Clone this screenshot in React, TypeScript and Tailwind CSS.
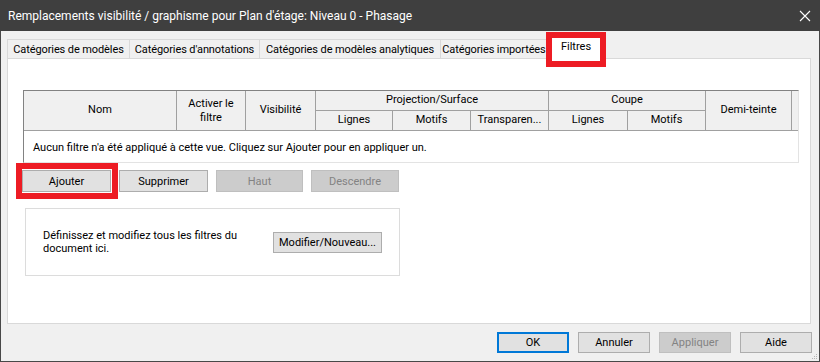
import React from "react";

// dialog button, classic win look
function Btn({
  label,
  className = "",
  disabled = false,
}: {
  label: string;
  className?: string;
  disabled?: boolean;
}) {
  return (
    <div
      className={`flex items-center justify-center border leading-none whitespace-nowrap ${
        disabled
          ? "bg-[#cccccc] border-[#bfbfbf] text-[#838383]"
          : "bg-[#e1e1e1] border-[#adadad] text-black"
      } ${className}`}
    >
      {label}
    </div>
  );
}

function Cell({ children, className = "" }: { children: React.ReactNode; className?: string }) {
  return (
    <div className={`flex items-center justify-center text-center border-r border-b border-[#a0a0a0] ${className}`}>
      {children}
    </div>
  );
}

function Tab({ label, className = "" }: { label: string; className?: string }) {
  return (
    <div className={`h-[19px] pt-[2px] flex items-center justify-center whitespace-nowrap tracking-[-0.1px] border-l border-t border-[#d9d9d9] ${className}`}>
      {label}
    </div>
  );
}

export default function App() {
  return (
    <div className="w-[820px] h-[362px] flex flex-col bg-[#f0f0f0] text-[11px] text-black font-['Roboto',sans-serif] overflow-hidden">
      {/* Title bar */}
      <div className="h-[31px] bg-[#3f3f3f] flex items-center justify-between pl-[8px] pr-[10px] text-white text-[12px]">
        <span>Remplacements visibilité / graphisme pour Plan d'étage: Niveau 0 - Phasage</span>
        <svg width="12" height="12" viewBox="0 0 12 12" className="mr-[-1px]">
          <path d="M1 1L11 11M11 1L1 11" stroke="#ffffff" strokeWidth="1.1" />
        </svg>
      </div>

      {/* Body */}
      <div className="relative flex-1 flex flex-col border-x border-b border-[#484848]">
        {/* Tabs */}
        <div className="h-[27px] flex items-end pl-[6px]">
          <Tab label="Catégories de modèles" className="w-[122px]" />
          <Tab label="Catégories d'annotations" className="w-[130px]" />
          <Tab label="Catégories de modèles analytiques" className="w-[181px]" />
          <Tab label="Catégories importées" className="w-[107px]" />
          <div className="relative z-10 w-[58px] h-[25px] mb-[-1px] bg-white flex items-center justify-center border-l border-t border-r border-[#d9d9d9]">
            Filtres
            <div className="absolute left-[-2px] top-[-3px] w-[60px] h-[35px] border-[6px] border-[#ed1c24]" />
          </div>
        </div>

        {/* Tab panel */}
        <div className="ml-[6px] w-[804px] h-[266px] bg-white border border-[#d9d9d9] flex flex-col">
          {/* Filter table */}
          <div className="ml-[15px] mt-[31px] w-[776px] border border-[#e3e3e3] border-l-[#828282] border-t-[#828282]">
            <div className="grid grid-cols-[153px_69px_70px_77px_78px_78px_79px_78px_86px_1fr] grid-rows-[20px_20px] bg-[#f0f0f0]">
              <Cell className="row-span-2">Nom</Cell>
              <Cell className="row-span-2 leading-[14px]">
                Activer le
                <br />
                filtre
              </Cell>
              <Cell className="row-span-2">Visibilité</Cell>
              <Cell className="col-span-3">Projection/Surface</Cell>
              <Cell className="col-span-2">Coupe</Cell>
              <Cell className="row-span-2">Demi-teinte</Cell>
              <div className="row-span-2 border-b border-[#a0a0a0]" />
              <Cell>Lignes</Cell>
              <Cell>Motifs</Cell>
              <Cell>Transparen...</Cell>
              <Cell>Lignes</Cell>
              <Cell>Motifs</Cell>
            </div>
            <div className="h-[31px] flex items-center pl-[9px] pt-[3px] bg-white">
              Aucun filtre n'a été appliqué à cette vue. Cliquez sur Ajouter pour en appliquer un.
            </div>
          </div>

          {/* Row buttons */}
          <div className="ml-[14px] mt-[7px] flex gap-[8px]">
            <div className="relative">
              <Btn label="Ajouter" className="w-[89px] h-[22px]" />
              <div className="absolute left-[-6px] top-[-7px] right-[-7px] bottom-[-7px] border-[6px] border-[#ed1c24]" />
            </div>
            <Btn label="Supprimer" className="w-[89px] h-[22px]" />
            <Btn label="Haut" disabled className="w-[87px] h-[22px]" />
            <Btn label="Descendre" disabled className="w-[88px] h-[22px]" />
          </div>

          {/* Group box */}
          <div className="ml-[17px] mt-[16px] w-[375px] h-[68px] border border-[#dcdcdc] flex items-center pl-[17px]">
            <div className="w-[230px] leading-[13px]">
              Définissez et modifiez tous les filtres du
              <br />
              document ici.
            </div>
            <Btn label="Modifier/Nouveau..." className="w-[109px] h-[21px]" />
          </div>
        </div>

        {/* Dialog buttons */}
        <div className="mt-[8px] flex justify-end gap-[9px] pr-[7px]">
          <Btn label="OK" className="w-[72px] h-[21px] border-2 !border-[#0078d7]" />
          <Btn label="Annuler" className="w-[72px] h-[21px]" />
          <Btn label="Appliquer" disabled className="w-[72px] h-[21px]" />
          <Btn label="Aide" className="w-[72px] h-[21px]" />
        </div>

        {/* Resize grip */}
        <svg width="7" height="7" viewBox="0 0 7 7" className="absolute right-[1px] bottom-[1px]">
          <rect x="5" y="1" width="1" height="1" fill="#b5b5b5" />
          <rect x="3" y="3" width="1" height="1" fill="#b5b5b5" />
          <rect x="5" y="3" width="1" height="1" fill="#b5b5b5" />
          <rect x="1" y="5" width="1" height="1" fill="#b5b5b5" />
          <rect x="3" y="5" width="1" height="1" fill="#b5b5b5" />
          <rect x="5" y="5" width="1" height="1" fill="#b5b5b5" />
        </svg>
      </div>
    </div>
  );
}
